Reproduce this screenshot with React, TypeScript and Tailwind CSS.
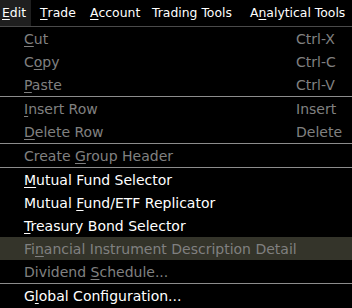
import React from 'react';

type Item =
  | { kind: 'sep' }
  | {
      kind: 'item';
      label: string;
      mnemonic: number;
      shortcut?: string;
      enabled?: boolean;
      active?: boolean;
    };

const menus = [
  { label: 'Edit', mnemonic: 0, cls: 'w-[31px] mr-[7px] bg-[#1f1f1f]' },
  { label: 'Trade', mnemonic: 0, cls: 'w-[50px]' },
  { label: 'Account', mnemonic: 0, cls: 'w-[62px]' },
  { label: 'Trading Tools', mnemonic: -1, cls: 'w-[98px]' },
  { label: 'Analytical Tools', mnemonic: 1, cls: 'flex-1' },
];

const items: Item[] = [
  { kind: 'item', label: 'Cut', mnemonic: 0, shortcut: 'Ctrl-X' },
  { kind: 'item', label: 'Copy', mnemonic: 1, shortcut: 'Ctrl-C' },
  { kind: 'item', label: 'Paste', mnemonic: 0, shortcut: 'Ctrl-V' },
  { kind: 'sep' },
  { kind: 'item', label: 'Insert Row', mnemonic: 0, shortcut: 'Insert' },
  { kind: 'item', label: 'Delete Row', mnemonic: 0, shortcut: 'Delete' },
  { kind: 'sep' },
  { kind: 'item', label: 'Create Group Header', mnemonic: 7 },
  { kind: 'sep' },
  { kind: 'item', label: 'Mutual Fund Selector', mnemonic: 0, enabled: true },
  { kind: 'item', label: 'Mutual Fund/ETF Replicator', mnemonic: 7, enabled: true },
  { kind: 'item', label: 'Treasury Bond Selector', mnemonic: 0, enabled: true },
  { kind: 'item', label: 'Financial Instrument Description Detail', mnemonic: 2, active: true },
  { kind: 'item', label: 'Dividend Schedule...', mnemonic: 9 },
  { kind: 'sep' },
  { kind: 'item', label: 'Global Configuration...', mnemonic: 1, enabled: true },
];

function Mnemonic({ text, index }: { text: string; index: number }) {
  if (index < 0) return <>{text}</>;
  return (
    <>
      {text.slice(0, index)}
      <span className="underline underline-offset-[2px] decoration-1">{text[index]}</span>
      {text.slice(index + 1)}
    </>
  );
}

export default function App() {
  return (
    <div className="w-[352px] h-[308px] overflow-hidden bg-black font-['DejaVu_Sans',sans-serif] text-[14px] leading-none select-none">
      {/* Menu bar */}
      <div className="flex h-[27px] items-stretch border-b border-[#4a4a4a] bg-black whitespace-nowrap text-[12.4px]">
        {menus.map((m) => (
          <div key={m.label} className={`flex items-center pl-[2px] text-white ${m.cls}`}>
            <Mnemonic text={m.label} index={m.mnemonic} />
          </div>
        ))}
      </div>

      {/* Dropdown */}
      <div className="flex flex-col">
        {items.map((it, i) =>
          it.kind === 'sep' ? (
            <div key={i} className="h-px bg-[#8c8c8c]" />
          ) : (
            <div
              key={i}
              className={`flex h-[23px] items-center pl-[24px] pt-px whitespace-nowrap ${
                it.active ? 'bg-[#34342a]' : ''
              } ${it.enabled ? 'text-white' : 'text-[#808080]'}`}
            >
              <span className="flex-1">
                <Mnemonic text={it.label} index={it.mnemonic} />
              </span>
              {it.shortcut && <span className="w-[56px]">{it.shortcut}</span>}
            </div>
          )
        )}
      </div>
    </div>
  );
}
